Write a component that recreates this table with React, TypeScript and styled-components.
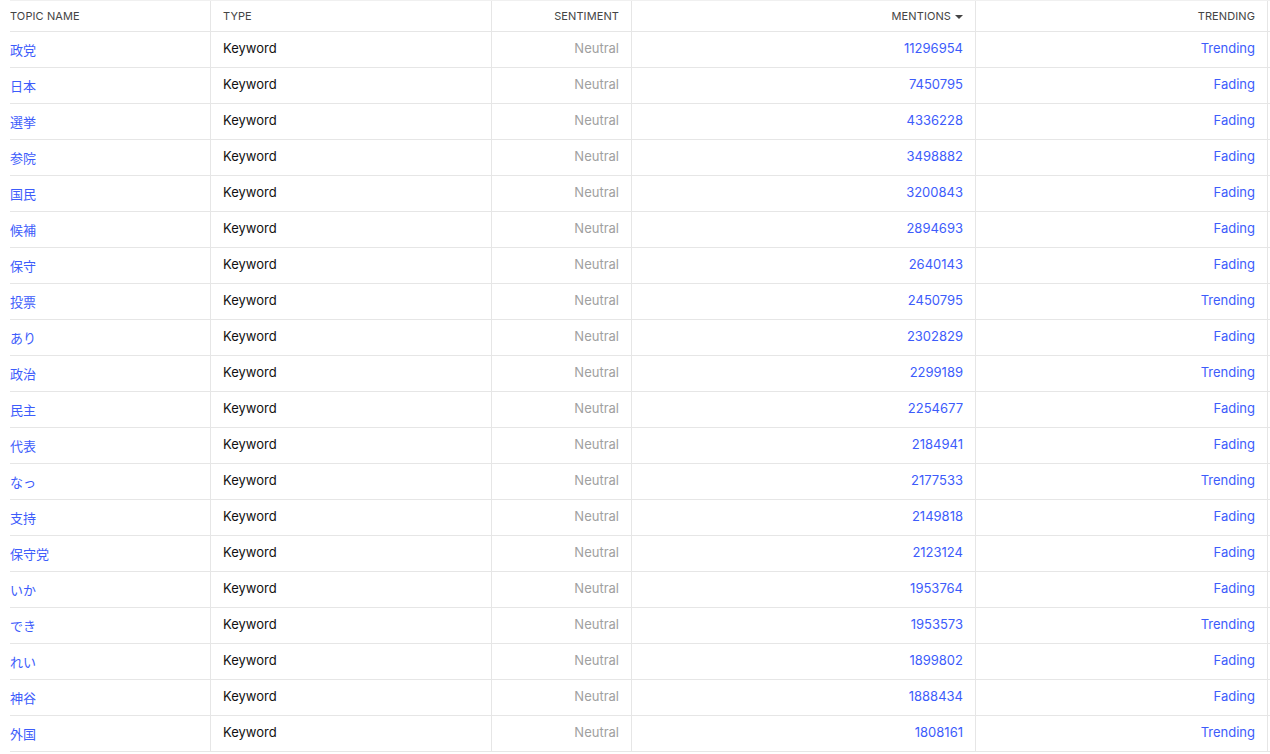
import React from "react";
import styled, { createGlobalStyle } from "styled-components";

const GlobalStyle = createGlobalStyle`
  html, body { margin: 0; padding: 0; background: #ffffff; }
  body { font-family: Inter, "Noto Sans CJK JP", sans-serif; }
`;

const COLS = "201px 281px 140px 344px 292px 240px";
const LINE = "#e6e6e6";
const BLUE = "#3d5cfb";

const Viewport = styled.div`
  width: 1270px;
  overflow: hidden;
  padding-left: 10px;
  box-sizing: border-box;
`;

const Table = styled.div`
  width: max-content;
  border-top: 1px solid #f0f0f0;
`;

const Row = styled.div<{ $head?: boolean }>`
  display: grid;
  grid-template-columns: ${COLS};
  height: ${(p) => (p.$head ? "31px" : "36px")};
`;

const Cell = styled.div<{ $align?: "left" | "right"; $first?: boolean }>`
  box-sizing: border-box;
  display: flex;
  align-items: center;
  justify-content: ${(p) => (p.$align === "right" ? "flex-end" : "flex-start")};
  padding: ${(p) => (p.$first ? "0 12px 3px 0" : "0 12px 3px")};
  border-right: 1px solid ${LINE};
  border-bottom: 1px solid ${LINE};
  font-size: 13px;
  white-space: nowrap;
  overflow: hidden;
`;

const HeadCell = styled(Cell)`
  font-size: 11px;
  color: #444444;
  letter-spacing: 0.1px;
  text-transform: uppercase;
  gap: 4px;
  padding-bottom: 0;
`;

const Link = styled.span`
  color: ${BLUE};
  font-family: Inter, "Noto Sans CJK JP", sans-serif;
  padding-top: 2px;
`;

const Plain = styled.span`
  color: #111111;
`;

const Muted = styled.span`
  color: #a0a0a0;
`;

const Num = styled.span`
  color: ${BLUE};
`;

const SortArrow = styled.span`
  width: 0;
  height: 0;
  border-left: 4px solid transparent;
  border-right: 4px solid transparent;
  border-top: 4px solid #444444;
  margin-top: 1px;
`;

type Item = { name: string; mentions: number; trend: "Trending" | "Fading" };

const data: Item[] = [
  { name: "政党", mentions: 11296954, trend: "Trending" },
  { name: "日本", mentions: 7450795, trend: "Fading" },
  { name: "選挙", mentions: 4336228, trend: "Fading" },
  { name: "参院", mentions: 3498882, trend: "Fading" },
  { name: "国民", mentions: 3200843, trend: "Fading" },
  { name: "候補", mentions: 2894693, trend: "Fading" },
  { name: "保守", mentions: 2640143, trend: "Fading" },
  { name: "投票", mentions: 2450795, trend: "Trending" },
  { name: "あり", mentions: 2302829, trend: "Fading" },
  { name: "政治", mentions: 2299189, trend: "Trending" },
  { name: "民主", mentions: 2254677, trend: "Fading" },
  { name: "代表", mentions: 2184941, trend: "Fading" },
  { name: "なっ", mentions: 2177533, trend: "Trending" },
  { name: "支持", mentions: 2149818, trend: "Fading" },
  { name: "保守党", mentions: 2123124, trend: "Fading" },
  { name: "いか", mentions: 1953764, trend: "Fading" },
  { name: "でき", mentions: 1953573, trend: "Trending" },
  { name: "れい", mentions: 1899802, trend: "Fading" },
  { name: "神谷", mentions: 1888434, trend: "Fading" },
  { name: "外国", mentions: 1808161, trend: "Trending" },
];

export default function App() {
  return (
    <>
      <GlobalStyle />
      <Viewport>
        <Table>
          <Row $head>
            <HeadCell $first>Topic Name</HeadCell>
            <HeadCell>Type</HeadCell>
            <HeadCell $align="right">Sentiment</HeadCell>
            <HeadCell $align="right">
              Mentions
              <SortArrow />
            </HeadCell>
            <HeadCell $align="right">Trending</HeadCell>
            <HeadCell />
          </Row>
          {data.map((d) => (
            <Row key={d.name}>
              <Cell $first>
                <Link>{d.name}</Link>
              </Cell>
              <Cell>
                <Plain>Keyword</Plain>
              </Cell>
              <Cell $align="right">
                <Muted>Neutral</Muted>
              </Cell>
              <Cell $align="right">
                <Num>{d.mentions}</Num>
              </Cell>
              <Cell $align="right">
                <Num>{d.trend}</Num>
              </Cell>
              <Cell />
            </Row>
          ))}
        </Table>
      </Viewport>
    </>
  );
}
